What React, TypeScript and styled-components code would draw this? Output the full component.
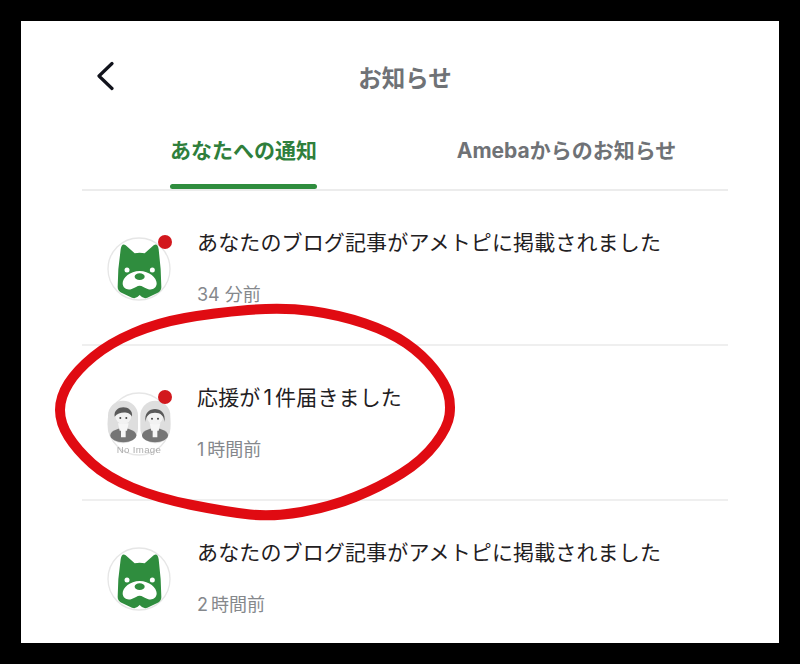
import React from "react";
import styled, { createGlobalStyle } from "styled-components";

const GlobalStyle = createGlobalStyle`
  html, body {
    margin: 0;
    padding: 0;
    background: #000;
  }
  body {
    font-family: Inter, "Noto Sans CJK JP", "Noto Sans", sans-serif;
  }
`;

const circlePoints = [
  [283, 307], [340, 315], [390, 332], [423, 355], [445, 383], [451, 403],
  [448, 427], [423, 460], [380, 487], [330, 507], [273, 517], [227, 512],
  [157, 498], [107, 477], [77, 450], [60, 423], [60, 397], [77, 370],
  [110, 343], [157, 323], [213, 313],
];

// smooth closed line through the hand drawn points
function smoothPath(pts: number[][]) {
  const mid = (a: number[], b: number[]) => [(a[0] + b[0]) / 2, (a[1] + b[1]) / 2];
  const start = mid(pts[pts.length - 1], pts[0]);
  let d = `M${start[0]} ${start[1]}`;
  pts.forEach((p, i) => {
    const m = mid(p, pts[(i + 1) % pts.length]);
    d += ` Q${p[0]} ${p[1]} ${m[0]} ${m[1]}`;
  });
  return d + " Z";
}

function App() {
  return (
    <Screen>
      <GlobalStyle />
      <Panel>
        <Header>
          <BackButton>
            <svg width="18" height="30" viewBox="0 0 18 30" fill="none">
              <path
                d="M15 2.5 L2 15 L15 27.5"
                stroke="#11131c"
                strokeWidth="3.2"
                strokeLinecap="round"
                strokeLinejoin="round"
              />
            </svg>
          </BackButton>
          <Title>お知らせ</Title>
        </Header>
        <Tabs>
          <Tab>
            <TabLabel $active>あなたへの通知</TabLabel>
          </Tab>
          <Tab>
            <TabLabel>Amebaからのお知らせ</TabLabel>
          </Tab>
        </Tabs>
        <Row>
          <Avatar>
            <DogIcon />
            <Badge />
          </Avatar>
          <RowBody>
            <Message>あなたのブログ記事がアメトピに掲載されました</Message>
            <Time>34 分前</Time>
          </RowBody>
        </Row>
        <Row>
          <Avatar>
            <NoImageIcon />
            <Badge />
          </Avatar>
          <RowBody>
            <Message>
              応援が<Count>1</Count>件届きました
            </Message>
            <Time>
              <TimeCount>1</TimeCount>時間前
            </Time>
          </RowBody>
        </Row>
        <Row>
          <Avatar>
            <DogIcon />
          </Avatar>
          <RowBody>
            <Message>あなたのブログ記事がアメトピに掲載されました</Message>
            <Time>
              <TimeCount>2</TimeCount>時間前
            </Time>
          </RowBody>
        </Row>
      </Panel>
      <Scribble width="800" height="664" viewBox="0 0 800 664" fill="none">
        <path d={smoothPath(circlePoints)} stroke="#e00b12" strokeWidth="10" strokeLinejoin="round" />
      </Scribble>
    </Screen>
  );
}

function DogIcon() {
  return (
    <svg width="64" height="64" viewBox="50 33 192 192">
      <circle cx="146" cy="129" r="93" fill="#fff" stroke="#e6e6e6" strokeWidth="4" />
      <path
        d="M91 70 Q94 50 106 58 L133 82 Q148 79 163 82 L190 58 Q202 50 205 70 L211 130 L213 183
           Q213 195 201 201 L171 215 Q159 220 148 207 Q137 220 125 215 L95 201 Q82 195 82 183 L84 130 Z"
        fill="#2f8d3e"
      />
      <circle cx="110" cy="132" r="7.5" fill="#fff" />
      <circle cx="186" cy="132" r="7.5" fill="#fff" />
      <path
        d="M148 135 C177 135 199 155 199 172 C199 187 185 194 172 189 C162 185 155 179 148 179
           C141 179 134 185 124 189 C111 194 97 187 97 172 C97 155 119 135 148 135 Z"
        fill="#fff"
      />
      <ellipse cx="148" cy="152" rx="15" ry="10" fill="#2f8d3e" />
    </svg>
  );
}

function NoImageIcon() {
  return (
    <svg width="64" height="64" viewBox="51 42 192 192">
      <circle cx="147" cy="138" r="93" fill="#fff" stroke="#e6e6e6" strokeWidth="4" />
      <rect x="54" y="68" width="90" height="128" rx="45" fill="#dedede" />
      <rect x="151" y="68" width="90" height="128" rx="45" fill="#dedede" />
      <ellipse cx="100" cy="172" rx="39" ry="21" fill="#757575" />
      <ellipse cx="195" cy="172" rx="39" ry="21" fill="#757575" />
      <path d="M84 136 H116 L111 158 H107 V178 H93 V158 H89 Z" fill="#f6f6f6" />
      <path d="M179 136 H211 L206 158 H202 V178 H188 V158 H184 Z" fill="#f6f6f6" />
      <circle cx="100" cy="114" r="24" fill="#f2f2f2" />
      <path d="M74 116 C68 78 132 78 126 116 C120 100 88 98 74 116 Z" fill="#5a5a5a" />
      <circle cx="195" cy="116" r="24" fill="#f2f2f2" />
      <path d="M167 132 C156 80 234 80 223 132 C223 114 212 104 195 104 C178 104 167 114 167 132 Z" fill="#5a5a5a" />
      <circle cx="91" cy="120" r="3" fill="#444" />
      <circle cx="109" cy="120" r="3" fill="#444" />
      <circle cx="186" cy="122" r="3" fill="#444" />
      <circle cx="204" cy="122" r="3" fill="#444" />
      <text
        x="147"
        y="224"
        textAnchor="middle"
        fontSize="29"
        fontFamily="Liberation Sans, sans-serif"
        letterSpacing="1"
        fill="#adadad"
      >
        No Image
      </text>
    </svg>
  );
}

const Screen = styled.div`
  position: relative;
  width: 800px;
  height: 664px;
  padding: 21px;
  box-sizing: border-box;
  overflow: hidden;
  background: #000;
`;

const Panel = styled.div`
  height: 622px;
  padding: 0 51px 0 61px;
  box-sizing: border-box;
  overflow: hidden;
  background: #fff;
`;

const Header = styled.header`
  display: grid;
  grid-template-columns: 1fr auto 1fr;
  align-items: center;
  height: 108px;
`;

const BackButton = styled.div`
  display: flex;
  padding: 2px 0 0 15px;
`;

const Title = styled.h1`
  margin: 0;
  padding-top: 4px;
  font-size: 23.5px;
  font-weight: 700;
  color: #6f7276;
`;

const Tabs = styled.div`
  display: grid;
  grid-template-columns: 1fr 1fr;
  height: 60px;
  border-bottom: 2px solid #ececec;
`;

const Tab = styled.div`
  display: flex;
  justify-content: center;
  align-items: flex-end;
`;

const TabLabel = styled.span<{ $active?: boolean }>`
  display: flex;
  flex-direction: column;
  justify-content: space-between;
  height: 57px;
  font-size: 21px;
  line-height: 38px;
  font-weight: 700;
  color: ${(p) => (p.$active ? "#2f7f3c" : "#6f7276")};

  &::after {
    content: "";
    height: 5px;
    border-radius: 3px;
    background: ${(p) => (p.$active ? "#2f8d3e" : "transparent")};
  }
`;

const Row = styled.div`
  display: flex;
  align-items: flex-start;
  height: 155px;
  padding: 46px 0 0 25px;
  box-sizing: border-box;
  border-bottom: 2px solid #efefef;
`;

const Avatar = styled.div`
  position: relative;
  flex: none;
  width: 64px;
  height: 64px;
  margin-right: 26px;

  svg {
    filter: blur(0.4px);
  }
`;

const Badge = styled.span`
  position: absolute;
  top: -2px;
  right: -1px;
  width: 14px;
  height: 14px;
  border-radius: 50%;
  background: #d2181d;
`;

const RowBody = styled.div`
  display: flex;
  flex-direction: column;
  margin-top: -8px;
`;

const Message = styled.div`
  font-size: 21px;
  line-height: 28px;
  letter-spacing: 0.14px;
  color: #1f2022;
`;

const Count = styled.span`
  margin: 0 3px;
`;

const Time = styled.div`
  margin-top: 26px;
  font-size: 18px;
  line-height: 24px;
  color: #85888c;
`;

const TimeCount = styled.span`
  margin-right: 3px;
`;

const Scribble = styled.svg`
  position: absolute;
  top: 0;
  left: 0;
  pointer-events: none;
`;

export default App;
